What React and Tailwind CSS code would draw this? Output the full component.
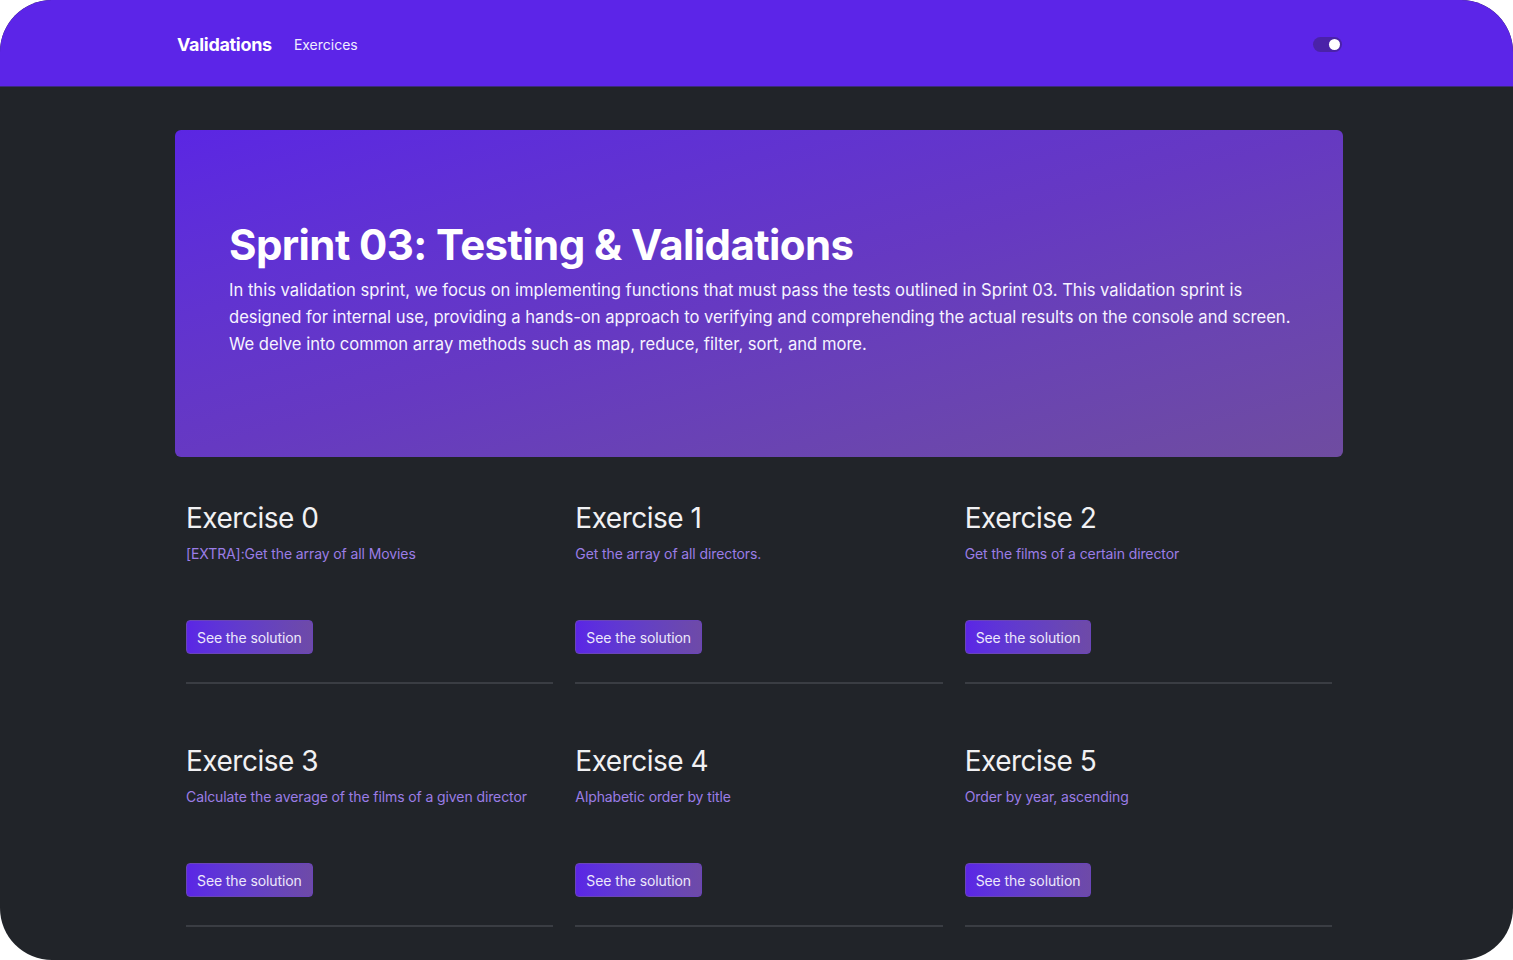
import React from "react";

const exercises = [
  { n: 0, text: "[EXTRA]:Get the array of all Movies" },
  { n: 1, text: "Get the array of all directors." },
  { n: 2, text: "Get the films of a certain director" },
  { n: 3, text: "Calculate the average of the films of a given director" },
  { n: 4, text: "Alphabetic order by title" },
  { n: 5, text: "Order by year, ascending" },
];

function Toggle() {
  return (
    <div className="w-[29px] h-[15px] rounded-full bg-[#4a22a8] flex items-center justify-end pr-[2px]">
      <div className="w-[11px] h-[11px] rounded-full bg-white" />
    </div>
  );
}

function ExerciseCard({ n, text }) {
  return (
    <div className="flex flex-col">
      <h3 className="text-[28px] leading-[34px] text-[#f1f1f3] tracking-[-0.5px]">Exercise {n}</h3>
      <p className="mt-[9px] text-[14px] leading-[20px] text-[#9b7de6] tracking-[-0.1px]">{text}</p>
      <div className="mt-[56px]">
        <button className="h-[34px] px-[10px] rounded-[4px] text-[14px] tracking-[-0.1px] text-[#ece8fb] bg-gradient-to-r from-[#5b25e6] to-[#6e4aa8] border border-[#6a45b8]">
          See the solution
        </button>
      </div>
      <div className="mt-[28px] h-[2px] bg-[#3a3d43]" />
    </div>
  );
}

export default function App() {
  return (
    <div className="w-[1513px] h-[960px] bg-white overflow-hidden" style={{ fontFamily: "Inter, 'Noto Sans', sans-serif" }}>
      <div className="w-full h-full rounded-[52px] overflow-hidden bg-[#212429]">
        <nav className="h-[87px] bg-[#5c25e8] border-b border-[#3b2a7a]">
          <div className="w-[1168px] ml-[175px] h-full flex items-center pl-[2px] pt-[2px]">
            <span className="text-[18px] font-bold text-white tracking-[-0.3px]">Validations</span>
            <span className="ml-[22px] text-[14px] text-[#f0ecff]">Exercices</span>
            <div className="ml-auto mr-[1px]">
              <Toggle />
            </div>
          </div>
        </nav>
        <main className="w-[1168px] ml-[175px]">
          <section className="mt-[43px] h-[327px] rounded-[6px] bg-gradient-to-br from-[#5b26e3] via-[#6639c2] to-[#6f4ca0] pl-[54px] pr-[50px] flex flex-col justify-center pb-[8px]">
            <h1 className="text-[42px] leading-[48px] font-bold text-white tracking-[-0.6px]">Sprint 03: Testing &amp; Validations</h1>
            <p className="mt-[8px] text-[16.6px] leading-[27px] text-[#f6f3ff]">
              In this validation sprint, we focus on implementing functions that must pass the tests outlined in Sprint 03. This validation sprint is designed for internal use, providing a hands-on approach to verifying and comprehending the actual results on the console and screen. We delve into common array methods such as map, reduce, filter, sort, and more.
            </p>
          </section>
          <div className="grid grid-cols-3 gap-x-[22px] gap-y-[60px] px-[11px] mt-[44px]">
            {exercises.map((e) => (
              <ExerciseCard key={e.n} n={e.n} text={e.text} />
            ))}
          </div>
        </main>
      </div>
    </div>
  );
}
